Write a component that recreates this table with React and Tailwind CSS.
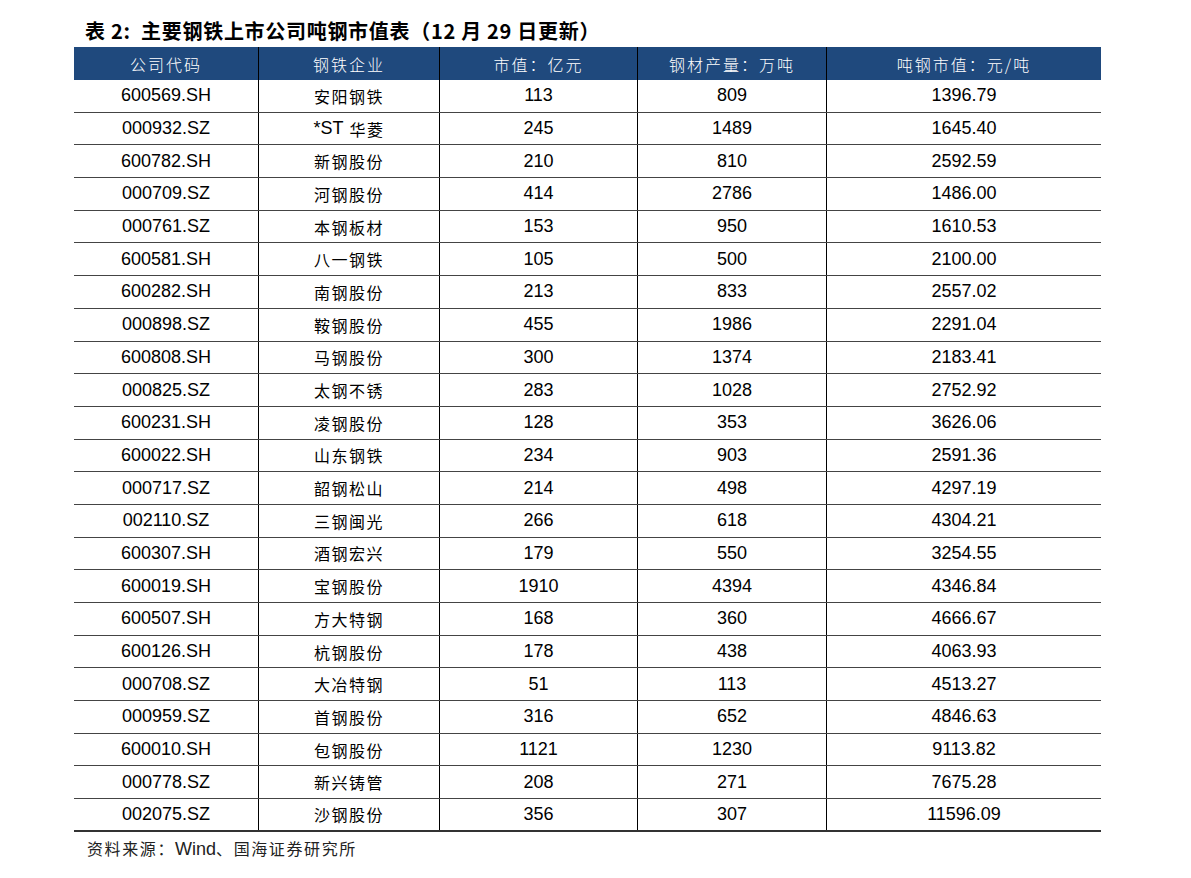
import React from 'react'

const HEADERS = ['公司代码', '钢铁企业', '市值：亿元', '钢材产量：万吨', '吨钢市值：元/吨']

const ROWS = [
  ['600569.SH', '安阳钢铁', '113', '809', '1396.79'],
  ['000932.SZ', '*ST 华菱', '245', '1489', '1645.40'],
  ['600782.SH', '新钢股份', '210', '810', '2592.59'],
  ['000709.SZ', '河钢股份', '414', '2786', '1486.00'],
  ['000761.SZ', '本钢板材', '153', '950', '1610.53'],
  ['600581.SH', '八一钢铁', '105', '500', '2100.00'],
  ['600282.SH', '南钢股份', '213', '833', '2557.02'],
  ['000898.SZ', '鞍钢股份', '455', '1986', '2291.04'],
  ['600808.SH', '马钢股份', '300', '1374', '2183.41'],
  ['000825.SZ', '太钢不锈', '283', '1028', '2752.92'],
  ['600231.SH', '凌钢股份', '128', '353', '3626.06'],
  ['600022.SH', '山东钢铁', '234', '903', '2591.36'],
  ['000717.SZ', '韶钢松山', '214', '498', '4297.19'],
  ['002110.SZ', '三钢闽光', '266', '618', '4304.21'],
  ['600307.SH', '酒钢宏兴', '179', '550', '3254.55'],
  ['600019.SH', '宝钢股份', '1910', '4394', '4346.84'],
  ['600507.SH', '方大特钢', '168', '360', '4666.67'],
  ['600126.SH', '杭钢股份', '178', '438', '4063.93'],
  ['000708.SZ', '大冶特钢', '51', '113', '4513.27'],
  ['000959.SZ', '首钢股份', '316', '652', '4846.63'],
  ['600010.SH', '包钢股份', '1121', '1230', '9113.82'],
  ['000778.SZ', '新兴铸管', '208', '271', '7675.28'],
  ['002075.SZ', '沙钢股份', '356', '307', '11596.09'],
]

const latin = "font-['Liberation_Sans','Noto_Sans_CJK_SC',sans-serif]"
const cjk = "font-['Noto_Sans_CJK_SC','Liberation_Sans',sans-serif]"

// "*ST 华菱" -> the *ST part is set in the latin face
function Company({ name }) {
  if (name.startsWith('*ST')) {
    return (
      <>
        <span className={`${latin} text-[18px] tracking-normal mr-[6px]`}>*ST</span>
        {name.slice(4)}
      </>
    )
  }
  return name
}

export default function App() {
  return (
    <div className="w-[1191px] h-[878px] bg-white text-black pl-[74px] pt-[17px]">
      <h1 className={`${cjk} font-bold text-[20px] leading-[28px] tracking-[0.7px] pl-[11px] mb-[2px]`}>
        表 2:&nbsp; 主要钢铁上市公司吨钢市值表（12 月 29 日更新）
      </h1>

      <div className="w-[1027px]">
        <div className="grid grid-cols-[185px_181px_198px_189px_274px] h-[33px] bg-[#1f497d] text-white">
          {HEADERS.map((h, i) => (
            <div
              key={h}
              className={`${cjk} flex items-center justify-center text-[16px] tracking-[2px] font-light ${
                i < 4 ? 'border-r-[1.5px] border-black' : ''
              }`}
            >
              {h}
            </div>
          ))}
        </div>

        {ROWS.map((row, r) => (
          <div
            key={row[0]}
            className={`grid grid-cols-[185px_181px_198px_189px_274px] h-[32.7px] ${
              r === ROWS.length - 1 ? 'border-b-2 border-[#333]' : 'border-b border-[#444]'
            }`}
          >
            {row.map((cell, i) => (
              <div
                key={i}
                className={`flex items-center justify-center ${
                  i === 1 ? `${cjk} text-[16px] tracking-[1.5px]` : `${latin} text-[18px]`
                } ${i < 4 ? 'border-r-[1.5px] border-black' : ''}`}
              >
                {i === 1 ? <Company name={cell} /> : cell}
              </div>
            ))}
          </div>
        ))}
      </div>

      <p className={`${cjk} text-[16px] tracking-[1.6px] pl-[13px] pt-[4px] text-[#222]`}>
        资料来源：<span className={`${latin} text-[18px] tracking-normal`}>Wind</span>、国海证券研究所
      </p>
    </div>
  )
}
